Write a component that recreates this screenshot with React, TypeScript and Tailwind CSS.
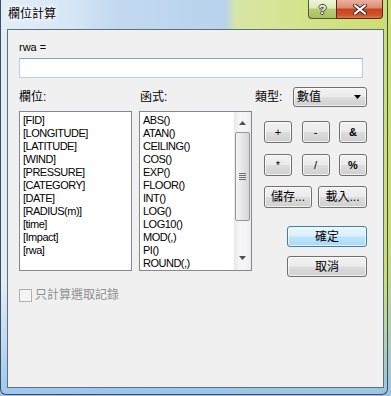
import React from "react";

const fields = [
  "[FID]",
  "[LONGITUDE]",
  "[LATITUDE]",
  "[WIND]",
  "[PRESSURE]",
  "[CATEGORY]",
  "[DATE]",
  "[RADIUS(m)]",
  "[time]",
  "[Impact]",
  "[rwa]",
];

const functions = [
  "ABS()",
  "ATAN()",
  "CEILING()",
  "COS()",
  "EXP()",
  "FLOOR()",
  "INT()",
  "LOG()",
  "LOG10()",
  "MOD(,)",
  "PI()",
  "ROUND(,)",
];

const btnSkin =
  "rounded-[3px] border text-black shadow-[inset_0_0_0_1px_rgba(255,255,255,0.7)]";
const btnGray =
  "border-[#707070] bg-[linear-gradient(to_bottom,#f2f2f2_0%,#ebebeb_48%,#dddddd_52%,#cfcfcf_100%)]";
const btnBlue =
  "border-[#3c7fb1] bg-[linear-gradient(to_bottom,#eaf6fd_0%,#d9f0fc_48%,#bee6fd_52%,#a7d9f5_100%)]";

function Btn({
  children,
  className = "",
  primary = false,
}: {
  children: React.ReactNode;
  className?: string;
  primary?: boolean;
}) {
  return (
    <div
      className={`flex items-center justify-center ${btnSkin} ${primary ? btnBlue : btnGray} ${className}`}
    >
      {children}
    </div>
  );
}

function Arrow({ up = false, color = "#505050" }: { up?: boolean; color?: string }) {
  return (
    <svg width="7" height="4" viewBox="0 0 7 4">
      <path d={up ? "M0 4 L3.5 0 L7 4 Z" : "M0 0 L7 0 L3.5 4 Z"} fill={color} />
    </svg>
  );
}

function Scrollbar() {
  return (
    <div className="flex w-[17px] shrink-0 flex-col bg-[linear-gradient(to_right,#e8e8e8,#f5f5f5_30%,#f5f5f5_70%,#ececec)]">
      <div className="flex h-[17px] items-end justify-center pb-[4px]">
        <Arrow up />
      </div>
      <div className="mx-[1px] mt-[3px] flex h-[89px] items-center justify-center rounded-[2px] border border-[#979797] bg-[linear-gradient(to_right,#f4f4f4,#e6e6e6_50%,#d6d6d6)]">
        <div className="flex flex-col gap-[1px]">
          <div className="h-[1px] w-[7px] bg-[#707070]" />
          <div className="h-[1px] w-[7px] bg-[#707070]" />
          <div className="h-[1px] w-[7px] bg-[#707070]" />
          <div className="h-[1px] w-[7px] bg-[#707070]" />
        </div>
      </div>
      <div className="flex-1" />
      <div className="flex h-[17px] items-start justify-center pt-[3px]">
        <Arrow />
      </div>
    </div>
  );
}

function ListBox({ items, scroll = false }: { items: string[]; scroll?: boolean }) {
  return (
    <div className="flex h-[160px] w-[113px] overflow-hidden border border-[#828790] bg-white">
      <div className="flex-1 overflow-hidden pl-[3px] pt-[2px]">
        {items.map((t) => (
          <div
            key={t}
            className="whitespace-nowrap text-[11px] leading-[13px] tracking-[-0.5px] text-black"
          >
            {t}
          </div>
        ))}
      </div>
      {scroll && <Scrollbar />}
    </div>
  );
}

export default function App() {
  return (
    <div className="h-[396px] w-[391px] overflow-hidden bg-[linear-gradient(to_bottom,#cddf6e_0%,#c9dc78_60%,#9fc2e4_100%)] font-['Liberation_Sans','Noto_Sans_CJK_TC',sans-serif]">
      <div className="flex h-[395px] w-[388px] flex-col rounded-b-[6px] border-x border-b border-[#3d4e62] bg-[linear-gradient(to_bottom,rgba(168,205,240,0)_0%,rgba(168,205,240,0)_72%,rgba(150,195,238,0.9)_100%),linear-gradient(to_right,#e2edf8_0%,#d6e6f5_18%,#c2d9f0_30%,#b9d3ee_58%,#d8e6a6_61%,#d5e48f_76%,#cbde72_100%)]">
        {/* Title bar */}
        <div className="flex h-[29px] shrink-0 items-start justify-between">
          <div className="pl-[7px] pt-[6px] text-[12px] leading-[16px] text-black [text-shadow:0_0_6px_#fff,0_0_10px_#fff,0_0_3px_#fff]">
            欄位計算
          </div>
          <div className="mr-[4px] flex">
            <div className="flex h-[19px] w-[28px] items-center justify-center rounded-bl-[4px] border border-r-0 border-t-0 border-[#4d5a3c] bg-[linear-gradient(to_bottom,#eef4d9_0%,#dde9b4_45%,#b9cd78_50%,#a9c060_100%)]">
              <span className="text-[13px] font-bold leading-none text-white [text-shadow:1px_0_#38442a,-1px_0_#38442a,0_1px_#38442a,0_-1px_#38442a]">
                ?
              </span>
            </div>
            <div className="flex h-[19px] w-[47px] items-center justify-center rounded-br-[4px] border border-t-0 border-[#5a2416] bg-[linear-gradient(to_bottom,#eab1a0_0%,#dc8a6f_45%,#c5431f_50%,#d0552b_85%,#e27a45_100%)]">
              <svg width="14" height="11" viewBox="0 0 14 11">
                <path d="M2 1.5 L12 9.5 M12 1.5 L2 9.5" stroke="#3a2a28" strokeWidth="4" strokeLinecap="square" />
                <path d="M2 1.5 L12 9.5 M12 1.5 L2 9.5" stroke="#ffffff" strokeWidth="2" strokeLinecap="square" />
              </svg>
            </div>
          </div>
        </div>

        {/* Client area */}
        <div className="ml-[6px] h-[359px] w-[377px] border border-[#5f6f80] bg-[#f0f0f0] pl-[11px] pt-[11px]">
          <div className="text-[11px] leading-[13px] text-black">rwa =</div>
          <div className="mt-[4px] h-[20px] w-[344px] border border-[#b5cfe7] border-t-[#7aa6d4] bg-white" />

          {/* labels row */}
          <div className="mt-[9px] flex h-[20px] w-[348px] items-center text-[12px] text-black">
            <div className="w-[121px]">欄位:</div>
            <div className="w-[115px]">函式:</div>
            <div className="flex-1">類型:</div>
            <div className={`flex h-[20px] w-[74px] items-center justify-between pl-[3px] pr-[5px] ${btnSkin} ${btnGray}`}>
              <span className="text-[12px] leading-none">數值</span>
              <Arrow color="#000" />
            </div>
          </div>

          {/* lists and buttons */}
          <div className="mt-[4px] flex">
            <ListBox items={fields} />
            <div className="ml-[7px]">
              <ListBox items={functions} scroll />
            </div>
            <div className="ml-[12px] flex w-[103px] flex-col text-[11px]">
              <div className="mt-[10px] flex justify-between">
                <Btn className="h-[22px] w-[28px]">+</Btn>
                <Btn className="h-[22px] w-[28px]">-</Btn>
                <Btn className="h-[22px] w-[28px] font-bold">&amp;</Btn>
              </div>
              <div className="mt-[11px] flex justify-between">
                <Btn className="h-[22px] w-[28px]">*</Btn>
                <Btn className="h-[22px] w-[28px]">/</Btn>
                <Btn className="h-[22px] w-[28px] font-bold">%</Btn>
              </div>
              <div className="mt-[10px] flex justify-between text-[12px]">
                <Btn className="h-[22px] w-[48px]">儲存...</Btn>
                <Btn className="h-[22px] w-[49px]">載入...</Btn>
              </div>
              <div className="mt-[18px] flex justify-end text-[12px]">
                <Btn primary className="h-[21px] w-[80px]">
                  確定
                </Btn>
              </div>
              <div className="mt-[9px] flex justify-end text-[12px]">
                <Btn className="h-[21px] w-[80px]">取消</Btn>
              </div>
            </div>
          </div>

          {/* checkbox */}
          <div className="mt-[12px] flex items-center">
            <div className="h-[13px] w-[13px] border border-[#b1b1b1] bg-[#f4f4f4]" />
            <span className="ml-[3px] text-[12px] leading-[13px] text-[#8f8f8f]">只計算選取記錄</span>
          </div>
        </div>
      </div>
    </div>
  );
}
